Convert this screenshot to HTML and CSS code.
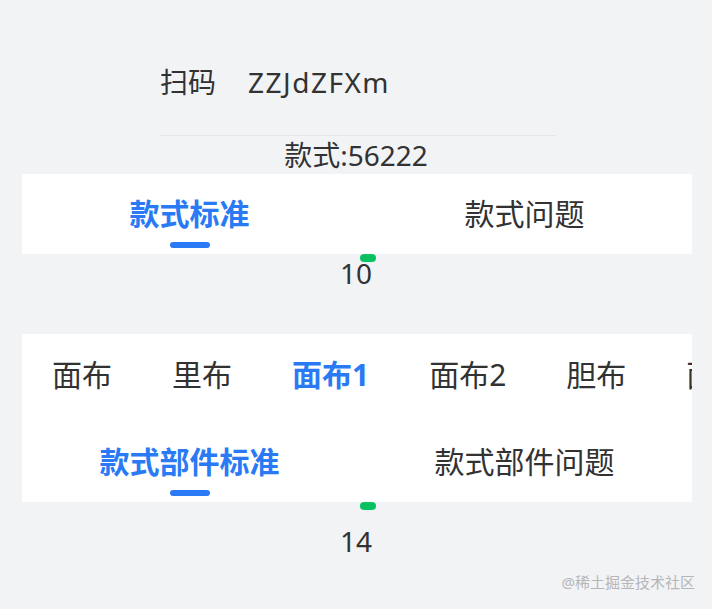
FILE: index.html
```html
<!DOCTYPE html>
<html lang="zh-CN">
<head>
<meta charset="utf-8">
<title>款式</title>
<link rel="stylesheet" href="styles.css">
</head>
<body>
<div class="page">
  <div class="scan">
    <span class="scan-label">扫码</span>
    <span class="scan-code">ZZJdZFXm</span>
  </div>
  <div class="divider"></div>
  <div class="style-no">款式:56222</div>

  <div class="panel">
    <div class="tabs">
      <div class="tab active">款式标准</div>
      <div class="tab">款式问题</div>
    </div>
  </div>
  <div class="count"><span class="dot"></span>10</div>

  <div class="panel panel-2">
    <div class="scroll-tabs">
      <div class="scroll-tab">面布</div>
      <div class="scroll-tab">里布</div>
      <div class="scroll-tab active">面布1</div>
      <div class="scroll-tab">面布2</div>
      <div class="scroll-tab">胆布</div>
      <div class="scroll-tab">面布3</div>
    </div>
    <div class="tabs">
      <div class="tab active">款式部件标准</div>
      <div class="tab">款式部件问题</div>
    </div>
  </div>
  <div class="count count-2"><span class="dot"></span>14</div>
</div>
<div class="watermark">@稀土掘金技术社区</div>
</body>
</html>
```

FILE: styles.css
```css
html, body {
  margin: 0;
  padding: 0;
}

body {
  background: #f2f3f5;
  font-family: "Noto Sans", "Noto Sans CJK SC", sans-serif;
  color: #323233;
  min-height: 609px;
}

.page {
  display: flex;
  flex-direction: column;
}

.scan {
  display: flex;
  align-items: center;
  width: 396px;
  height: 40px;
  margin: 62px 0 0 160px;
  font-size: 28px;
  line-height: 40px;
}

.scan-label {
  margin-right: 32px;
}

.scan-code {
  letter-spacing: 1.5px;
}

.divider {
  width: 396px;
  height: 1px;
  margin: 33px 0 0 160px;
  background: #e4e5e8;
}

.style-no {
  text-align: center;
  font-size: 28px;
  line-height: 38px;
}

.panel {
  margin: 0 20px 0 22px;
  background: #ffffff;
  overflow: hidden;
}

.panel-2 {
  margin-top: 42px;
}

.tabs {
  display: flex;
  height: 80px;
}

.tab {
  flex: 1;
  position: relative;
  text-align: center;
  font-size: 30px;
  line-height: 80px;
  white-space: nowrap;
}

.tab.active {
  color: #2b7af5;
  font-weight: 700;
}

.tab.active::after {
  content: "";
  position: absolute;
  left: 50%;
  bottom: 6px;
  width: 40px;
  height: 6px;
  margin-left: -20px;
  border-radius: 3px;
  background: #2b7af5;
}

.scroll-tabs {
  display: flex;
  height: 88px;
  white-space: nowrap;
  overflow: hidden;
}

.scroll-tab {
  flex: none;
  padding: 0 30px;
  font-size: 30px;
  line-height: 82px;
}

.scroll-tab.active {
  color: #2b7af5;
  font-weight: 700;
}

.count {
  position: relative;
  text-align: center;
  font-size: 28px;
  line-height: 38px;
}

.count-2 {
  padding-top: 20px;
}

.dot {
  position: absolute;
  top: 0;
  left: calc(50% + 4px);
  width: 16px;
  height: 8px;
  border-radius: 4px;
  background: #07c160;
}

.watermark {
  position: absolute;
  top: 572px;
  right: 17px;
  font-size: 15px;
  line-height: 20px;
  color: #b5b6b8;
  white-space: nowrap;
}
```
